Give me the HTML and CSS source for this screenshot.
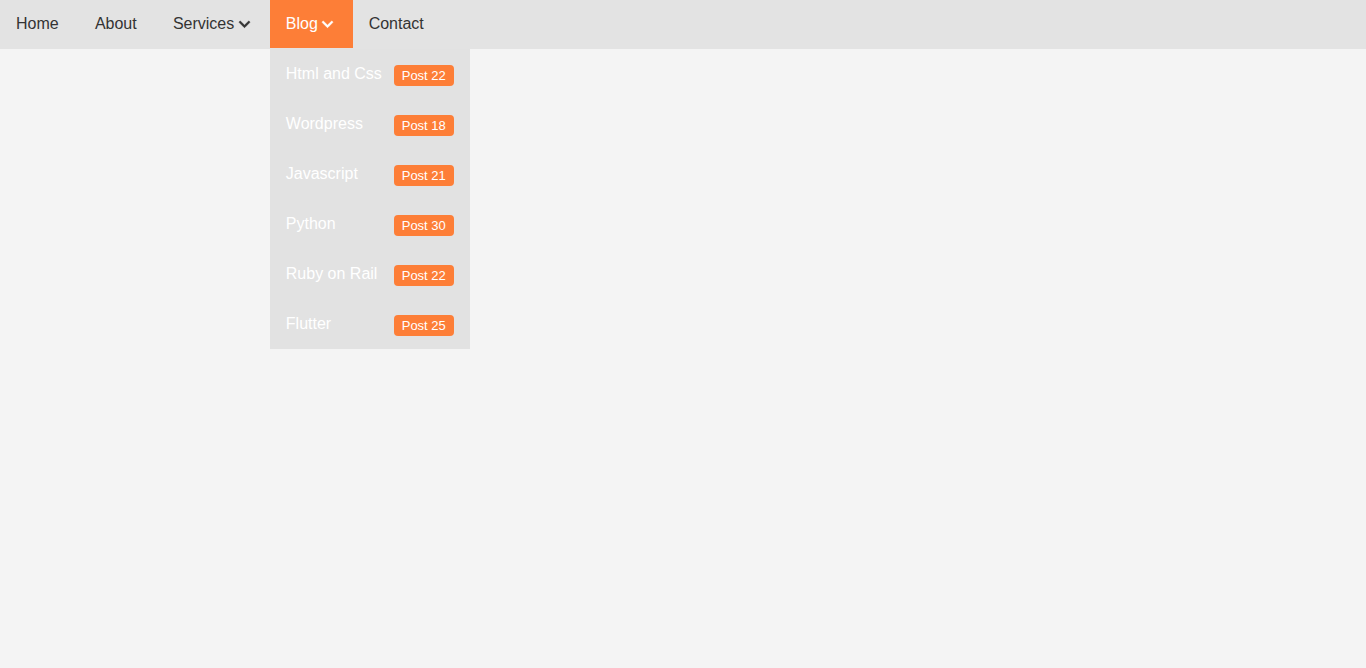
FILE: index.html
```html
<!DOCTYPE html>
<html lang="en">
<head>
<meta charset="utf-8">
<title>Menu</title>
<link rel="stylesheet" href="styles.css">
</head>
<body>
<nav class="navbar">
  <ul class="menu">
    <li class="menu-item"><a class="menu-link" href="#">Home</a></li>
    <li class="menu-item"><a class="menu-link" href="#">About</a></li>
    <li class="menu-item"><a class="menu-link" href="#">Services<svg class="chev" viewBox="5 123 438 266" aria-hidden="true"><path d="M207.029 381.476L12.686 187.132c-9.373-9.373-9.373-24.569 0-33.941l22.667-22.667c9.357-9.357 24.522-9.375 33.901-.04L224 284.505l154.745-154.021c9.379-9.335 24.544-9.317 33.901.04l22.667 22.667c9.373 9.373 9.373 24.569 0 33.941L240.971 381.476c-9.373 9.372-24.569 9.372-33.942 0z"/></svg></a></li>
    <li class="menu-item open">
      <a class="menu-link" href="#">Blog<svg class="chev" viewBox="5 123 438 266" aria-hidden="true"><path d="M207.029 381.476L12.686 187.132c-9.373-9.373-9.373-24.569 0-33.941l22.667-22.667c9.357-9.357 24.522-9.375 33.901-.04L224 284.505l154.745-154.021c9.379-9.335 24.544-9.317 33.901.04l22.667 22.667c9.373 9.373 9.373 24.569 0 33.941L240.971 381.476c-9.373 9.372-24.569 9.372-33.942 0z"/></svg></a>
      <ul class="dropdown">
        <li class="drop-item"><span class="drop-label">Html and Css</span><span class="badge">Post 22</span></li>
        <li class="drop-item"><span class="drop-label">Wordpress</span><span class="badge">Post 18</span></li>
        <li class="drop-item"><span class="drop-label">Javascript</span><span class="badge">Post 21</span></li>
        <li class="drop-item"><span class="drop-label">Python</span><span class="badge">Post 30</span></li>
        <li class="drop-item"><span class="drop-label">Ruby on Rail</span><span class="badge">Post 22</span></li>
        <li class="drop-item"><span class="drop-label">Flutter</span><span class="badge">Post 25</span></li>
      </ul>
    </li>
    <li class="menu-item"><a class="menu-link" href="#">Contact</a></li>
  </ul>
</nav>
</body>
</html>
```
FILE: styles.css
```css
* { box-sizing: border-box; }
html, body { margin: 0; padding: 0; }
body {
  background: #f4f4f4;
  font-family: "Liberation Sans", Arial, sans-serif;
  font-size: 16px;
  color: #333;
  min-height: 668px;
}
.navbar {
  background: #e3e3e3;
  height: 49px;
}
.menu {
  list-style: none;
  margin: 0;
  padding: 0;
  display: flex;
  align-items: flex-start;
}
.menu-item {
  position: relative;
  margin-right: 4.2px;
}
.menu-link {
  display: flex;
  align-items: center;
  height: 48px;
  padding: 0 16px;
  line-height: 18px;
  color: #333;
  text-decoration: none;
}
.chev {
  width: 11px;
  height: 6.7px;
  margin-left: 4.4px;
  margin-top: 1px;
  fill: currentColor;
  stroke: currentColor;
  stroke-width: 14px;
  overflow: visible;
}
.open { margin-right: 0; }
.open .menu-link {
  background: #fd7e37;
  color: #fff;
  padding-right: 19.4px;
}
.dropdown {
  position: absolute;
  top: 49px;
  left: 0;
  width: 200px;
  margin: 0;
  padding: 0;
  list-style: none;
  background: #e2e2e2;
}
.drop-item {
  height: 50px;
  padding: 16px 16px 0;
  display: flex;
  justify-content: space-between;
  align-items: flex-start;
  color: #fff;
  line-height: 18.4px;
}
.badge {
  margin-top: 0;
  background: #fd7e37;
  color: #fff;
  font-size: 13px;
  line-height: 15px;
  padding: 3px 8px;
  border-radius: 4px;
}
```
